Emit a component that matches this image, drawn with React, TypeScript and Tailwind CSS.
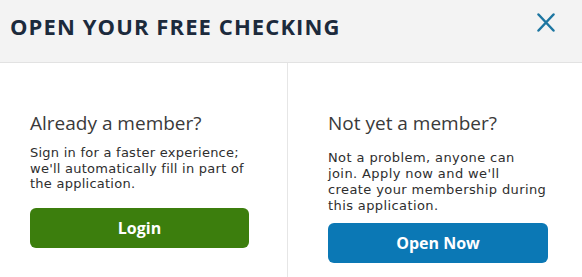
import React from "react";

export default function App() {
  return (
    <div className="w-[582px] h-[277px] bg-white overflow-hidden flex flex-col" style={{ fontFamily: '"Open Sans", "Liberation Sans", sans-serif' }}>
      <div className="h-[63px] shrink-0 bg-[#f3f3f3] border-b border-[#e2e2e2] flex items-start justify-between pl-[10px] pr-[27px]">
        <h1 className="mt-[12px] text-[22px] leading-[28px] font-bold text-[#1c2a3c] tracking-[1.1px] whitespace-nowrap">OPEN YOUR FREE CHECKING</h1>
        <svg className="mt-[13px]" width="18" height="19" viewBox="0 0 18 19" fill="none">
          <path d="M1.5 1.5 L16.5 17.5 M16.5 1.5 L1.5 17.5" stroke="#1d76a1" strokeWidth="2.5" strokeLinecap="round" />
        </svg>
      </div>
      <div className="flex flex-1">
        <div className="w-[288px] border-r border-[#e6e6e6] pl-[30px] pt-[48px]">
          <h2 className="text-[19px] leading-[24px] text-[#3a3a3a] font-normal whitespace-nowrap">Already a member?</h2>
          <p className="mt-[10px] text-[13px] leading-[15.5px] text-[#2e2e2e] tracking-[0.25px] whitespace-nowrap" style={{ fontFamily: '"DejaVu Sans", sans-serif' }}>
            Sign in for a faster experience;
            <br />
            we'll automatically fill in part of
            <br />
            the application.
          </p>
          <button className="mt-[16px] w-[219px] h-[40px] rounded-[6px] bg-[#3c7e0d] text-white font-bold text-[16px]">Login</button>
        </div>
        <div className="flex-1 pl-[40px] pt-[48px]">
          <h2 className="text-[19px] leading-[24px] text-[#3a3a3a] font-normal whitespace-nowrap">Not yet a member?</h2>
          <p className="mt-[15px] text-[13px] leading-[16px] text-[#2e2e2e] tracking-[0.4px] whitespace-nowrap" style={{ fontFamily: '"DejaVu Sans", sans-serif' }}>
            Not a problem, anyone can
            <br />
            join. Apply now and we'll
            <br />
            create your membership during
            <br />
            this application.
          </p>
          <button className="mt-[9px] w-[220px] h-[40px] rounded-[6px] bg-[#0b78b5] text-white font-bold text-[16px]">Open Now</button>
        </div>
      </div>
    </div>
  );
}
